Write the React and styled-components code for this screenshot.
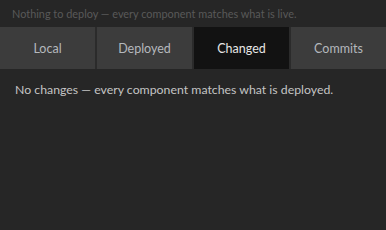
import styled, { createGlobalStyle } from "styled-components";

const GlobalStyle = createGlobalStyle`
  html, body {
    margin: 0;
    padding: 0;
    background: #262626;
  }
  body {
    font-family: "Lato", "Noto Sans", sans-serif;
  }
`;

const Page = styled.div`
  width: 386px;
  height: 230px;
  background: #262626;
  display: flex;
  flex-direction: column;
`;

const Notice = styled.div`
  height: 27px;
  padding-left: 12px;
  display: flex;
  align-items: center;
  font-size: 10.9px;
  color: #595959;
`;

const Tabs = styled.div`
  display: grid;
  grid-template-columns: repeat(4, 1fr);
  gap: 2px;
  height: 42px;
  background: #2b2b2b;
`;

const Tab = styled.button`
  border: none;
  margin: 0;
  padding: 0;
  font-family: inherit;
  font-size: 12.5px;
  display: flex;
  align-items: center;
  justify-content: center;
  background: ${(p) => (p.$active ? "#121212" : "#3c3c3c")};
  color: ${(p) => (p.$active ? "#e6e6e6" : "#b4b8bc")};
  cursor: pointer;
`;

const Body = styled.div`
  padding: 13px 15px;
  font-size: 12.3px;
  color: #c4c4c4;
`;

const tabs = ["Local", "Deployed", "Changed", "Commits"];

const App = () => {
  return (
    <Page>
      <GlobalStyle />
      <Notice>Nothing to deploy — every component matches what is live.</Notice>
      <Tabs>
        {tabs.map((t) => (
          <Tab key={t} $active={t === "Changed"}>
            {t}
          </Tab>
        ))}
      </Tabs>
      <Body>No changes — every component matches what is deployed.</Body>
    </Page>
  );
};

export default App;
